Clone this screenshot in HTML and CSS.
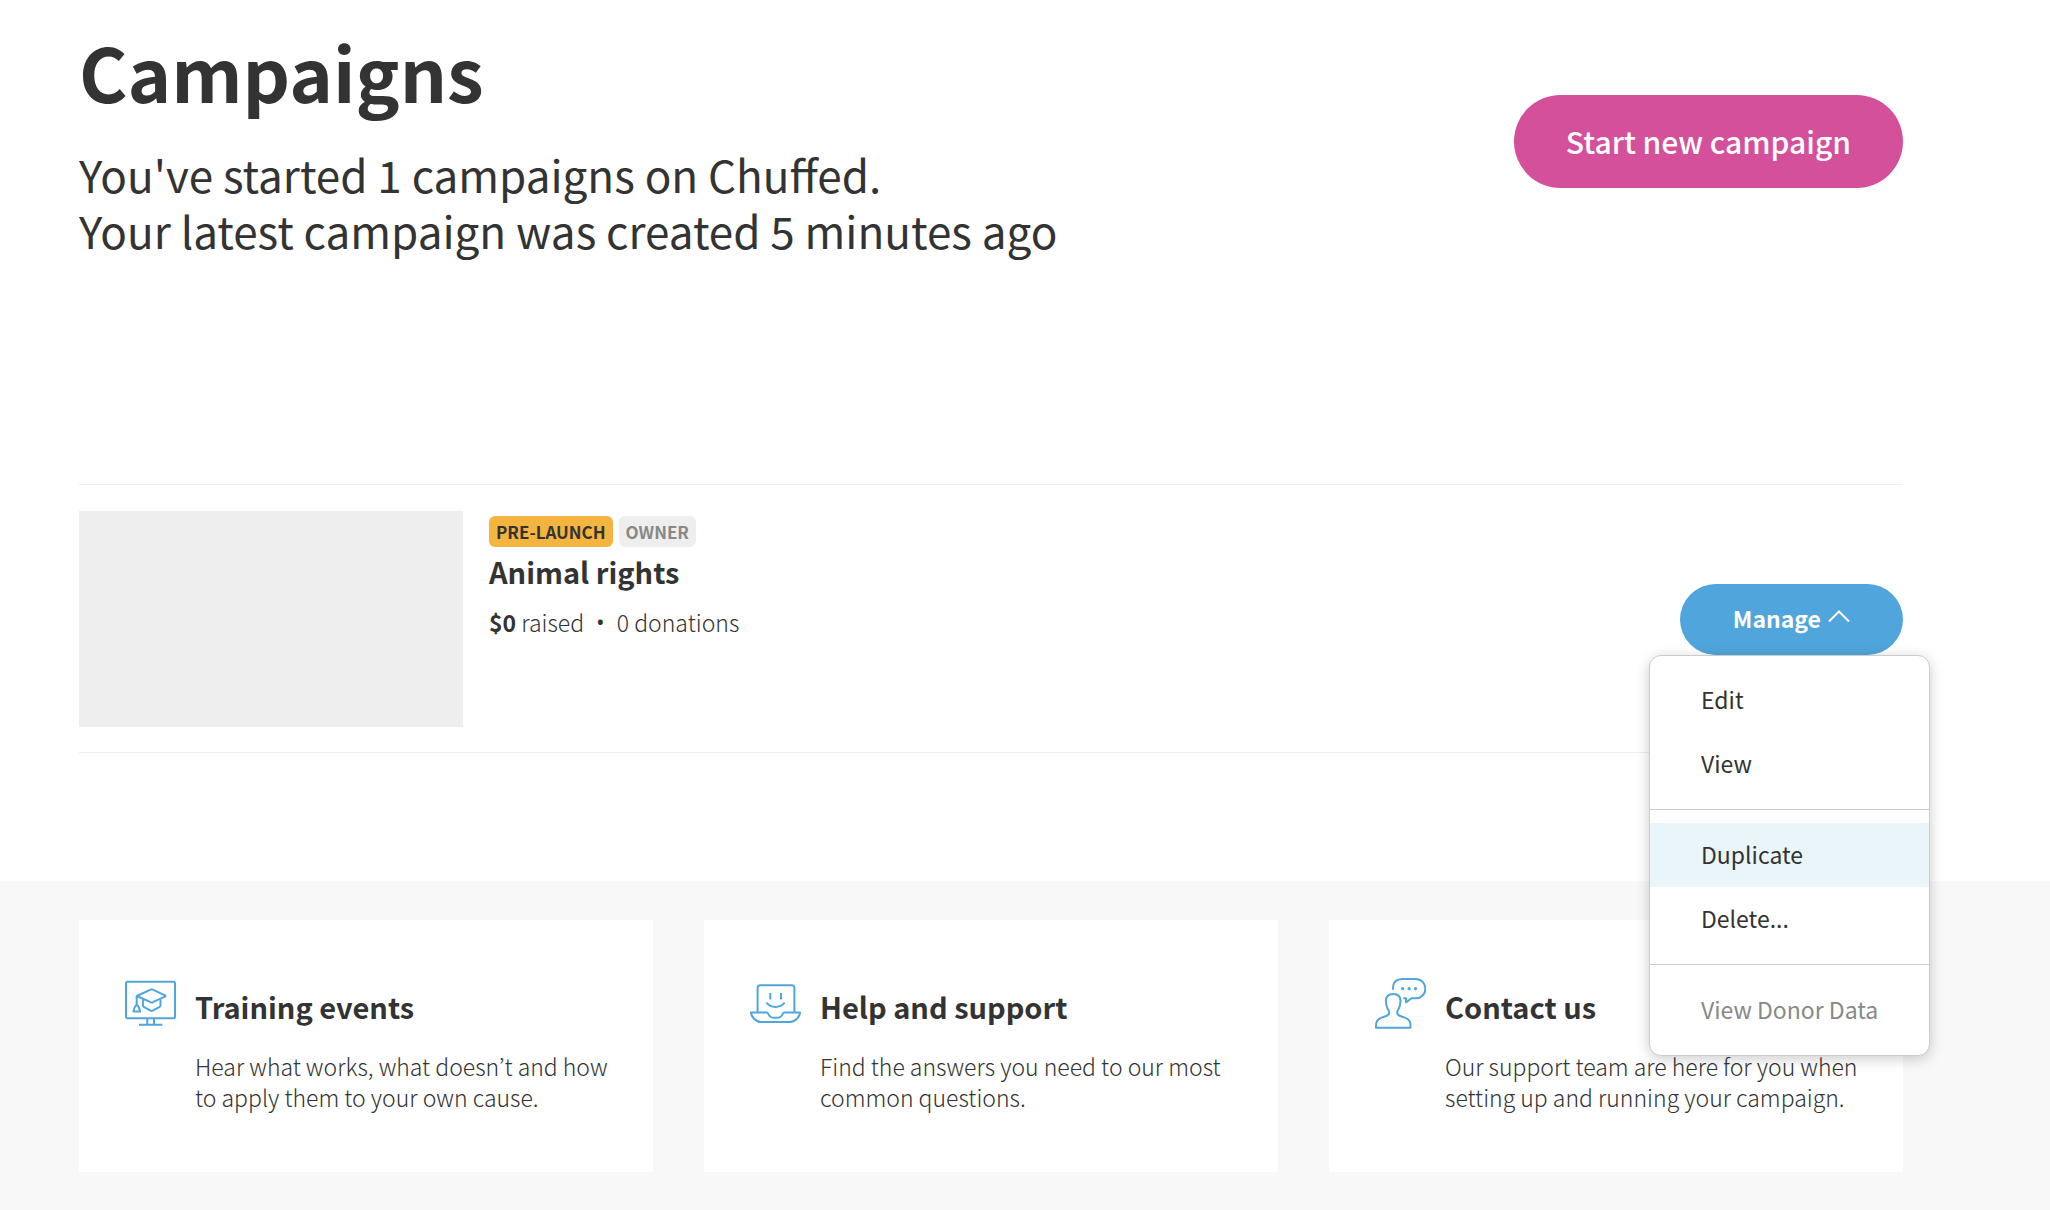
FILE: index.html
```html
<!DOCTYPE html>
<html lang="en">
<head>
    <meta charset="UTF-8">
    <meta name="viewport" content="width=device-width, initial-scale=1.0">
    <title>Campaigns - Chuffed</title>
    <link rel="stylesheet" href="styles.css">
</head>
<body>
    <main class="container">
        <header class="page-header">
            <div>
                <h1>Campaigns</h1>
                <p class="summary">You've started 1 campaigns on Chuffed.<br>Your latest campaign was created 5 minutes ago</p>
            </div>
            <a href="#" class="btn btn-start">Start new campaign</a>
        </header>

        <section class="campaign">
            <div class="thumb"></div>
            <div class="campaign-info">
                <div class="badges">
                    <span class="badge badge-status">PRE-LAUNCH</span>
                    <span class="badge badge-role">OWNER</span>
                </div>
                <h2>Animal rights</h2>
                <p class="stats"><span><strong>$0</strong> raised</span><span class="dot">•</span><span>0 donations</span></p>
            </div>
            <div class="manage">
                <button type="button" class="btn btn-manage" aria-expanded="true" aria-controls="manageMenu">
                    Manage
                    <svg class="chevron" viewBox="0 0 22 12" aria-hidden="true"><path d="M1 11.5 11 1.5 21 11.5"/></svg>
                </button>
                <div class="menu" id="manageMenu">
                    <a href="#">Edit</a>
                    <a href="#">View</a>
                    <hr>
                    <a href="#" class="active">Duplicate</a>
                    <button type="button">Delete...</button>
                    <hr>
                    <button type="button" disabled>View Donor Data</button>
                </div>
            </div>
        </section>
    </main>

    <footer class="help">
        <div class="cards container">
            <article class="card">
                <svg class="icon" viewBox="0 0 51 52" aria-hidden="true">
                    <rect x="1" y="3.8" width="49" height="36.4" rx="1.5"/>
                    <path d="M22.3 40.2v6.5M29 40.2v6.5M14 46.8h23.3"/>
                    <path d="M11.7 18 25.7 11.6q1-.4 2 0L40 17.3q1 .7 0 1.4l-12.3 5.5q-1 .4-2 0z"/>
                    <path d="M17.9 21.2v6q0 1 .8 1.6l7 3.9q1 .5 2 0l7-3.9q.8-.6.8-1.6v-6"/>
                    <path d="M11.7 18v8.4M11.7 26.4q-2.2 2.2-3.3 7.2h6.8q-1-5-3.5-7.2z"/>
                </svg>
                <div class="card-text">
                    <h3>Training events</h3>
                    <p>Hear what works, what doesn’t and how to apply them to your own cause.</p>
                </div>
            </article>
            <article class="card">
                <svg class="icon" viewBox="0 0 51 52" aria-hidden="true">
                    <path d="M7.6 34.3V9.8q0-2.6 2.6-2.6h31.6q2.6 0 2.6 2.6v24.5"/>
                    <path d="M.9 34.5h15.8q1 0 1.4 1 1.4 4.3 6.2 4.3h2.4q4.8 0 6.2-4.3.4-1 1.4-1h15.8q-.4 3.4-3.2 6.2-3.2 3.3-7 3.3H11q-3.800 0-7-3.300Q1.300 37.900.9 34.500z"/>
                    <path d="M20.300 15v6.400M31 15v6.400M16.300 24.700q3.700 4.300 9.200 4.300t9.200-4.300"/>
                </svg>
                <div class="card-text">
                    <h3>Help and support</h3>
                    <p>Find the answers you need to our most common questions.</p>
                </div>
            </article>
            <article class="card">
                <svg class="icon" viewBox="0 0 51 52" aria-hidden="true">
                    <path d="M18 11.700V9.500Q18.200 1.200 27.500 1.100h13.300a9.600 9.600 0 0 1 0 19.200h-4.300L31 24.500v-4.300h-2.700"/>
                    <path d="M1 49.800h34.500v-2.600q0-5.500-5.200-7.300l-5.100-1.900q-3-1.100-3-3.300 0-2 1.600-4 1.700-3.200 1.700-7.600 0-7.100-7.300-7.100t-7.300 7.100q0 4.400 1.700 7.600 1.600 2 1.600 4 0 2.200-3 3.300l-5.100 1.900Q1 41.700 1 47.200z"/>
                    <g class="dots"><circle cx="27.700" cy="10.700" r="1.600"/><circle cx="34.100" cy="10.700" r="1.600"/><circle cx="40.500" cy="10.700" r="1.600"/></g>
                </svg>
                <div class="card-text">
                    <h3>Contact us</h3>
                    <p>Our support team are here for you when setting up and running your campaign.</p>
                </div>
            </article>
        </div>
    </footer>
</body>
</html>
```
FILE: styles.css
```css
* {
    margin: 0;
    padding: 0;
    box-sizing: border-box;
}

body {
    font-family: 'Noto Sans CJK KR', 'Open Sans', sans-serif;
    font-size: 23px;
    line-height: 32px;
    color: #333;
    background: #fff;
    min-height: 100vh;
    display: flex;
    flex-direction: column;
}

.container {
    padding-left: 79px;
    padding-right: 147px;
}

.page-header {
    display: flex;
    justify-content: space-between;
    align-items: center;
    padding-top: 25px;
    margin-bottom: 226px;
}

h1 {
    font-size: 74px;
    line-height: 92px;
    font-weight: 700;
    margin-bottom: 29px;
}

.summary {
    font-size: 44px;
    line-height: 56px;
}

.btn {
    display: flex;
    align-items: center;
    padding: 0 52px 2px;
    border: none;
    border-radius: 48px;
    color: #fff;
    font-family: inherit;
    text-decoration: none;
    white-space: nowrap;
    cursor: pointer;
}

.btn-start {
    height: 93px;
    background: #d4509b;
    font-size: 30px;
    font-weight: 500;
}

.btn-manage {
    height: 71px;
    padding: 0 53px 2px;
    gap: 7px;
    background: #50a5dc;
    font-size: 23px;
    font-weight: 700;
}

.chevron {
    width: 22px;
    height: 12px;
    margin-bottom: 4px;
    fill: none;
    stroke: #fff;
    stroke-width: 2;
}

.campaign {
    display: flex;
    gap: 26px;
    padding: 26px 0 25px;
    border-top: 1px solid #eee;
    border-bottom: 1px solid #eee;
}

.thumb {
    width: 384px;
    height: 216px;
    background: #eee;
}

.campaign-info {
    flex: 1;
    padding-top: 5px;
}

.badges {
    display: flex;
    gap: 6px;
    margin-bottom: 4px;
}

.badge {
    padding: 0 7px;
    border-radius: 6px;
    font-size: 17px;
    line-height: 31px;
    font-weight: 700;
}

.badge-status {
    background: #f3b53f;
}

.badge-role {
    background: #eee;
    color: #888;
}

h2 {
    font-size: 29px;
    line-height: 40px;
    margin-bottom: 15px;
}

.stats {
    display: flex;
    gap: 12px;
    font-weight: 300;
}

.stats strong {
    font-weight: 700;
}

.dot {
    font-family: 'Open Sans', sans-serif;
    font-weight: 400;
}

.manage {
    position: relative;
    align-self: center;
}

/* Dropdown under the Manage button */
.menu {
    position: absolute;
    top: 100%;
    right: -27px;
    z-index: 1;
    width: 281px;
    padding: 12px 0 13px;
    background: #fff;
    border: 1px solid #ccc;
    border-radius: 12px;
    box-shadow: 0 3px 14px rgba(0, 0, 0, 0.2);
}

.menu a,
.menu button {
    display: block;
    width: 100%;
    padding: 0 51px 2px;
    border: none;
    background: none;
    color: #333;
    font-family: inherit;
    font-size: 23px;
    line-height: 62px;
    text-align: left;
    text-decoration: none;
    white-space: nowrap;
}

.menu a:hover,
.menu .active {
    background: #eaf5fa;
}

.menu button:disabled {
    color: #888;
}

.menu hr {
    margin: 13px 0;
    border: none;
    border-top: 1px solid #ccc;
}

.help {
    flex: 1;
    margin-top: 128px;
    background: #f8f8f8;
}

.cards {
    display: grid;
    grid-template-columns: repeat(3, 1fr);
    gap: 51px;
    padding-top: 39px;
    padding-bottom: 38px;
}

.card {
    display: flex;
    gap: 19px;
    padding: 58px 40px 59px 46px;
    background: #fff;
}

.icon {
    flex: none;
    width: 51px;
    height: 52px;
    fill: none;
    stroke: #50a5dc;
    stroke-width: 2;
    stroke-linejoin: round;
}

.dots {
    fill: #50a5dc;
    stroke: none;
}

.card-text {
    padding-top: 10px;
}

h3 {
    font-size: 29px;
    line-height: 36px;
    margin-bottom: 27px;
}

.card p {
    line-height: 31px;
    font-weight: 300;
}
```
